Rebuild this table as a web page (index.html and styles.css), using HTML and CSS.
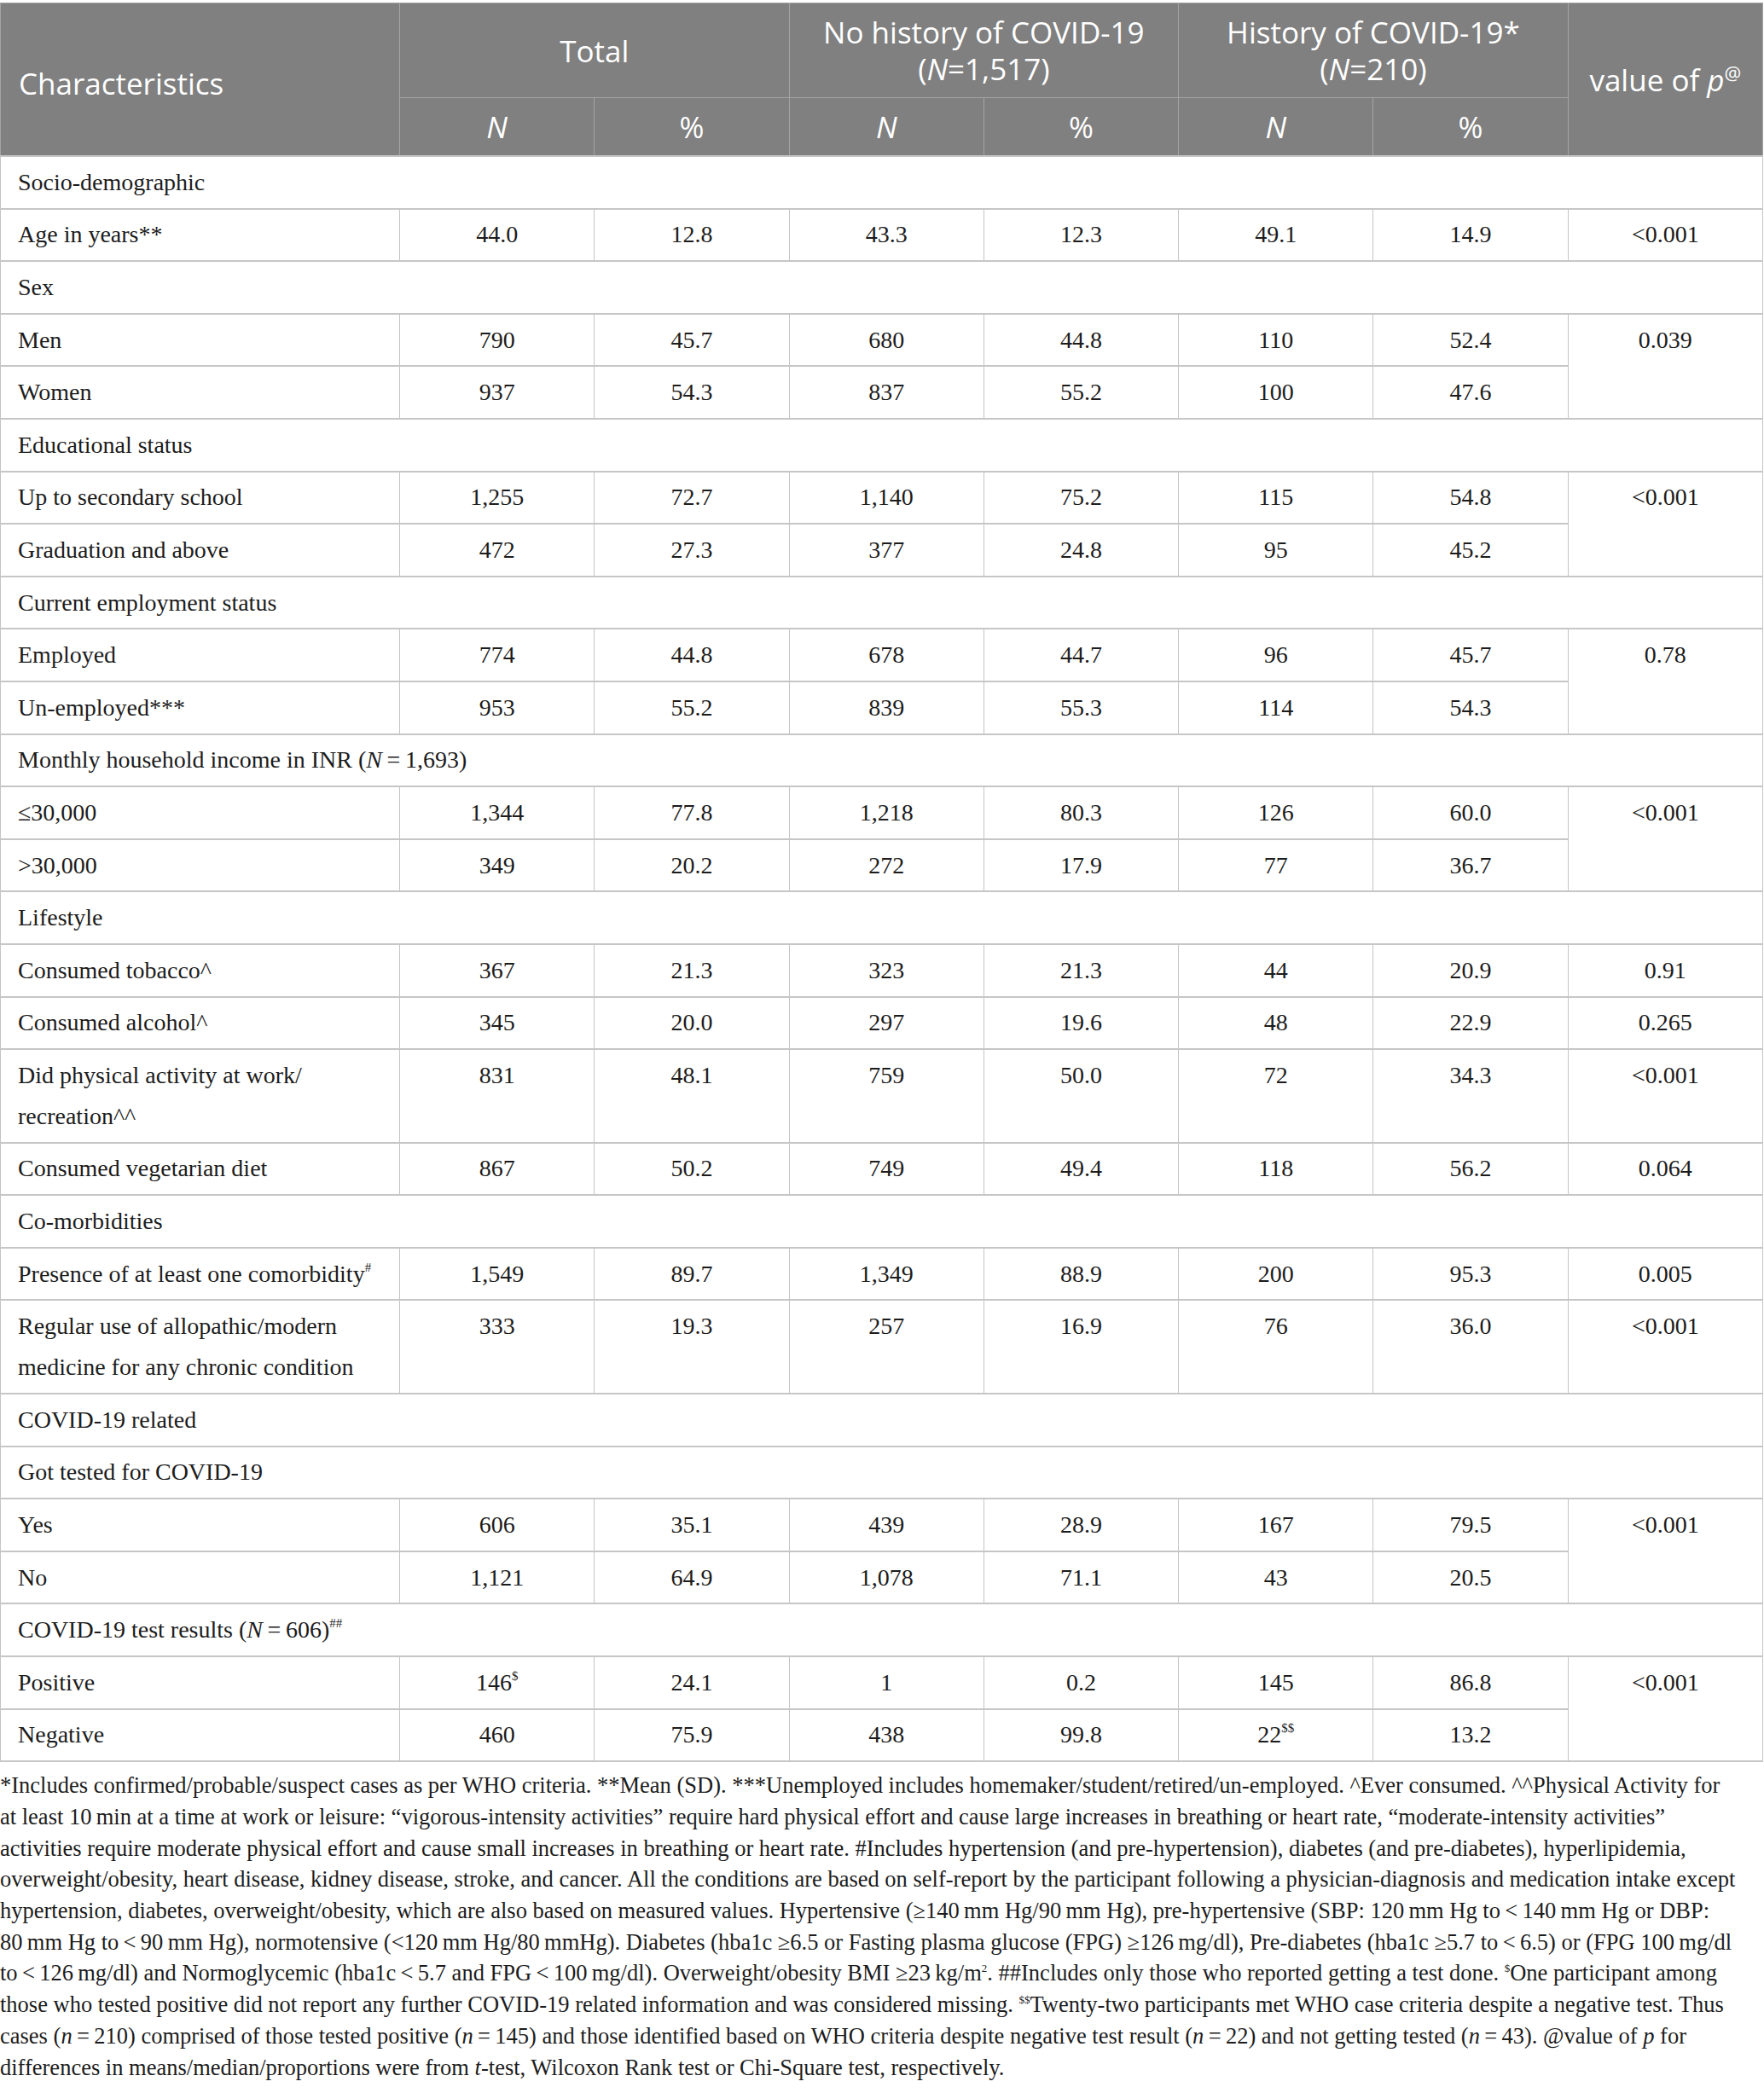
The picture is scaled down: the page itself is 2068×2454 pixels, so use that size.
FILE: index.html
```html
<!DOCTYPE html>
<html>
<head>
    <meta charset="utf-8">
    <title>Characteristics by history of COVID-19</title>
    <link rel="stylesheet" href="styles.css">
</head>

<body>
    <table class="data">
        <colgroup>
            <col class="col-label">
            <col><col><col><col><col><col><col>
        </colgroup>
        <thead>
            <tr>
                <th rowspan="2" class="head-label">Characteristics</th>
                <th colspan="2">Total</th>
                <th colspan="2">No history of COVID-19<br>(<i>N</i>=1,517)</th>
                <th colspan="2">History of COVID-19*<br>(<i>N</i>=210)</th>
                <th rowspan="2">value of <i>p</i><sup>@</sup></th>
            </tr>
            <tr>
                <th><i>N</i></th><th>%</th>
                <th><i>N</i></th><th>%</th>
                <th><i>N</i></th><th>%</th>
            </tr>
        </thead>
        <tbody>
            <tr class="section"><td colspan="8">Socio-demographic</td></tr>
            <tr><td>Age in years**</td><td>44.0</td><td>12.8</td><td>43.3</td><td>12.3</td><td>49.1</td><td>14.9</td><td>&lt;0.001</td></tr>

            <tr class="section"><td colspan="8">Sex</td></tr>
            <tr><td>Men</td><td>790</td><td>45.7</td><td>680</td><td>44.8</td><td>110</td><td>52.4</td><td rowspan="2">0.039</td></tr>
            <tr><td>Women</td><td>937</td><td>54.3</td><td>837</td><td>55.2</td><td>100</td><td>47.6</td></tr>

            <tr class="section"><td colspan="8">Educational status</td></tr>
            <tr><td>Up to secondary school</td><td>1,255</td><td>72.7</td><td>1,140</td><td>75.2</td><td>115</td><td>54.8</td><td rowspan="2">&lt;0.001</td></tr>
            <tr><td>Graduation and above</td><td>472</td><td>27.3</td><td>377</td><td>24.8</td><td>95</td><td>45.2</td></tr>

            <tr class="section"><td colspan="8">Current employment status</td></tr>
            <tr><td>Employed</td><td>774</td><td>44.8</td><td>678</td><td>44.7</td><td>96</td><td>45.7</td><td rowspan="2">0.78</td></tr>
            <tr><td>Un-employed***</td><td>953</td><td>55.2</td><td>839</td><td>55.3</td><td>114</td><td>54.3</td></tr>

            <tr class="section"><td colspan="8">Monthly household income in INR (<i>N</i>&#8201;=&#8201;1,693)</td></tr>
            <tr><td>&le;30,000</td><td>1,344</td><td>77.8</td><td>1,218</td><td>80.3</td><td>126</td><td>60.0</td><td rowspan="2">&lt;0.001</td></tr>
            <tr><td>&gt;30,000</td><td>349</td><td>20.2</td><td>272</td><td>17.9</td><td>77</td><td>36.7</td></tr>

            <tr class="section"><td colspan="8">Lifestyle</td></tr>
            <tr><td>Consumed tobacco^</td><td>367</td><td>21.3</td><td>323</td><td>21.3</td><td>44</td><td>20.9</td><td>0.91</td></tr>
            <tr><td>Consumed alcohol^</td><td>345</td><td>20.0</td><td>297</td><td>19.6</td><td>48</td><td>22.9</td><td>0.265</td></tr>
            <tr><td>Did physical activity at work/<wbr>recreation^^</td><td>831</td><td>48.1</td><td>759</td><td>50.0</td><td>72</td><td>34.3</td><td>&lt;0.001</td></tr>
            <tr><td>Consumed vegetarian diet</td><td>867</td><td>50.2</td><td>749</td><td>49.4</td><td>118</td><td>56.2</td><td>0.064</td></tr>

            <tr class="section"><td colspan="8">Co-morbidities</td></tr>
            <tr><td>Presence of at least one comorbidity<sup>#</sup></td><td>1,549</td><td>89.7</td><td>1,349</td><td>88.9</td><td>200</td><td>95.3</td><td>0.005</td></tr>
            <tr><td>Regular use of allopathic/modern medicine for any chronic condition</td><td>333</td><td>19.3</td><td>257</td><td>16.9</td><td>76</td><td>36.0</td><td>&lt;0.001</td></tr>

            <tr class="section"><td colspan="8">COVID-19 related</td></tr>
            <tr class="section"><td colspan="8">Got tested for COVID-19</td></tr>
            <tr><td>Yes</td><td>606</td><td>35.1</td><td>439</td><td>28.9</td><td>167</td><td>79.5</td><td rowspan="2">&lt;0.001</td></tr>
            <tr><td>No</td><td>1,121</td><td>64.9</td><td>1,078</td><td>71.1</td><td>43</td><td>20.5</td></tr>

            <tr class="section"><td colspan="8">COVID-19 test results (<i>N</i>&#8201;=&#8201;606)<sup>##</sup></td></tr>
            <tr><td>Positive</td><td>146<sup>$</sup></td><td>24.1</td><td>1</td><td>0.2</td><td>145</td><td>86.8</td><td rowspan="2">&lt;0.001</td></tr>
            <tr><td>Negative</td><td>460</td><td>75.9</td><td>438</td><td>99.8</td><td>22<sup>$$</sup></td><td>13.2</td></tr>
        </tbody>
    </table>

    <p class="notes">*Includes confirmed/probable/suspect cases as per WHO criteria. **Mean (SD). ***Unemployed includes homemaker/student/retired/un-employed. ^Ever consumed. ^^Physical Activity for<br>
        at least 10&#8201;min at a time at work or leisure: &ldquo;vigorous-intensity activities&rdquo; require hard physical effort and cause large increases in breathing or heart rate, &ldquo;moderate-intensity activities&rdquo;<br>
        activities require moderate physical effort and cause small increases in breathing or heart rate. #Includes hypertension (and pre-hypertension), diabetes (and pre-diabetes), hyperlipidemia,<br>
        overweight/obesity, heart disease, kidney disease, stroke, and cancer. All the conditions are based on self-report by the participant following a physician-diagnosis and medication intake except<br>
        hypertension, diabetes, overweight/obesity, which are also based on measured values. Hypertensive (&ge;140&#8201;mm Hg/90&#8201;mm Hg), pre-hypertensive (SBP: 120&#8201;mm Hg to&#8201;&lt;&#8201;140&#8201;mm Hg or DBP:<br>
        80&#8201;mm Hg to&#8201;&lt;&#8201;90&#8201;mm Hg), normotensive (&lt;120&#8201;mm Hg/80&#8201;mmHg). Diabetes (hba1c &ge;6.5 or Fasting plasma glucose (FPG) &ge;126&#8201;mg/dl), Pre-diabetes (hba1c &ge;5.7 to&#8201;&lt;&#8201;6.5) or (FPG 100&#8201;mg/dl<br>
        to&#8201;&lt;&#8201;126&#8201;mg/dl) and Normoglycemic (hba1c&#8201;&lt;&#8201;5.7 and FPG&#8201;&lt;&#8201;100&#8201;mg/dl). Overweight/obesity BMI &ge;23&#8201;kg/m<sup>2</sup>. ##Includes only those who reported getting a test done. <sup>$</sup>One participant among<br>
        those who tested positive did not report any further COVID-19 related information and was considered missing. <sup>$$</sup>Twenty-two participants met WHO case criteria despite a negative test. Thus<br>
        cases (<i>n</i>&#8201;=&#8201;210) comprised of those tested positive (<i>n</i>&#8201;=&#8201;145) and those identified based on WHO criteria despite negative test result (<i>n</i>&#8201;=&#8201;22) and not getting tested (<i>n</i>&#8201;=&#8201;43). @value of <i>p</i> for<br>
        differences in means/median/proportions were from <i>t</i>-test, Wilcoxon Rank test or Chi-Square test, respectively.</p>
</body>
</html>
```

FILE: styles.css
```css
body{
    margin: 0;
    padding-top: 3px;
    background-color: #fff;
    color: #1c1c1c;
    font-family: "Liberation Serif", serif;}

.data{
    width: 2067px;
    border-collapse: collapse;
    table-layout: fixed;
    border: 1px solid #c4c4c4;}

.col-label{
    width: 468px;}

.data thead th{
    background-color: #808080;
    color: #fff;
    font-family: "Open Sans", Lato, sans-serif;
    font-weight: normal;
    font-size: 35px;
    line-height: 43px;
    padding: 12px 8px;
    border: 1px solid #a4a4a4;
    text-align: center;
    vertical-align: middle;}

.data thead th.head-label{
    text-align: left;
    padding-left: 21px;
    padding-top: 20px;}

.data thead sup{
    font-size: 22px;
    line-height: 0;
    vertical-align: 13px;}

.data td{
    font-size: 28px;
    line-height: 48px;
    padding: 5.8px 8px;
    border-left: 1px solid #c4c4c4;
    border-right: 1px solid #c4c4c4;
    border-top: 2px solid #c6c6c6;
    border-bottom: 2px solid #c6c6c6;
    text-align: center;
    vertical-align: top;}

.data td:first-child{
    text-align: left;
    padding-left: 20px;
    padding-right: 12px;}

.data .section td{
    text-align: left;
    padding-left: 20px;}

.data td sup{
    font-size: 15px;
    line-height: 0;
    vertical-align: 12px;}

/* forced breaks follow the printed table note */
.notes{
    margin: 9px 0 0 0;
    width: 2068px;
    font-size: 26.5px;
    line-height: 36.7px;
    color: #1c1c1c;}

.notes sup{
    font-size: 13px;
    line-height: 0;
    vertical-align: 10px;}
```
